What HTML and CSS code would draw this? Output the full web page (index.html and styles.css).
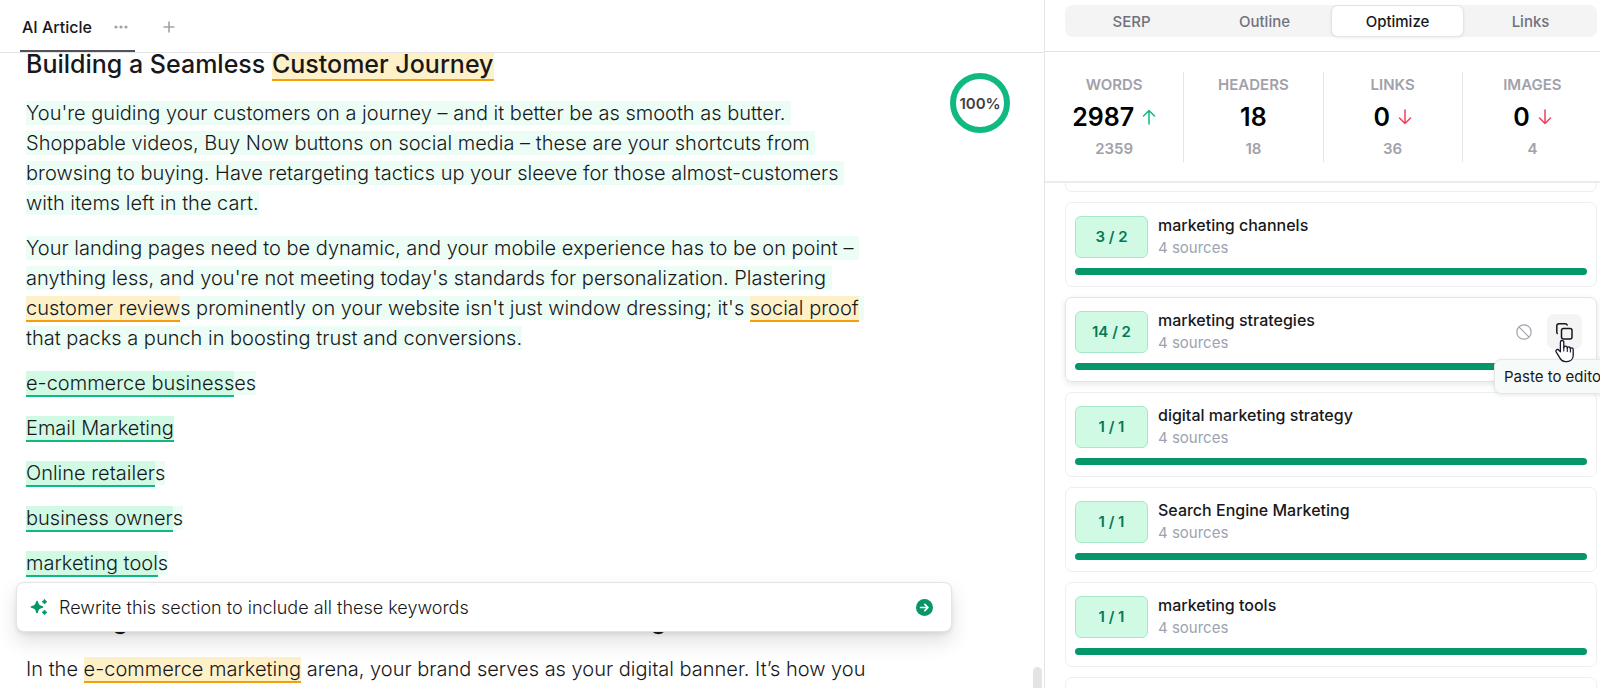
FILE: index.html
```html
<!DOCTYPE html>
<html lang="en">
<head>
<meta charset="utf-8">
<title>AI Article</title>
<link rel="stylesheet" href="styles.css">
</head>
<body>
<div class="app">
  <main class="editor">
    <header class="doc-tabs">
      <div class="doc-tab">
        <button class="doc-name" type="button">AI Article</button>
        <button class="icon-button" type="button" aria-label="Tab options"><svg width="14" height="4" viewBox="0 0 14 4" fill="currentColor"><circle cx="2" cy="2" r="1.6"/><circle cx="7" cy="2" r="1.6"/><circle cx="12" cy="2" r="1.6"/></svg></button>
      </div>
      <button class="icon-button" type="button" aria-label="Add tab"><svg width="12" height="12" viewBox="0 0 12 12" fill="none" stroke="currentColor" stroke-width="1.6"><path d="M6 .5v11M.5 6h11"/></svg></button>
    </header>
    <div class="scroll-area">
      <article class="article">
        <h2>Building a Seamless <mark class="warn">Customer Journey</mark></h2>
        <p><span class="fresh">You're guiding your customers on a journey – and it better be as smooth as butter. Shoppable videos, Buy Now buttons on social media – these are your shortcuts from browsing to buying. Have retargeting tactics up your sleeve for those almost-customers with items left in the cart.</span></p>
        <p><span class="fresh">Your landing pages need to be dynamic, and your mobile experience has to be on point – anything less, and you're not meeting today's standards for personalization. Plastering <mark class="warn">customer review</mark>s prominently on your website isn't just window dressing; it's <mark class="warn">social proof</mark> that packs a punch in boosting trust and conversions.</span></p>
        <p><span class="fresh"><mark class="good">e-commerce business</mark>es</span></p>
        <p><span class="fresh"><mark class="good">Email Marketing</mark></span></p>
        <p><span class="fresh"><mark class="good">Online retailer</mark>s</span></p>
        <p><span class="fresh"><mark class="good">business owner</mark>s</span></p>
        <p><span class="fresh"><mark class="good">marketing tool</mark>s</span></p>
        <h2 class="next">Creating an Effective E-commerce Website Marketing</h2>
        <p>In the <mark class="warn">e-commerce marketing</mark> arena, your brand serves as your digital banner. It’s how you</p>
      </article>
      <div class="score"><svg width="60" height="60" viewBox="0 0 60 60" fill="none"><circle cx="30" cy="30" r="27" stroke="#10b981" stroke-width="6"/></svg><span class="score-value">100%</span></div>
      <div class="scroll-thumb"></div>
      <form class="prompt">
        <svg width="18" height="18" viewBox="0 0 18 18" fill="#059669"><path d="M7 3.500c.9 3.600 1.900 4.600 5.500 5.500-3.600.9-4.600 1.900-5.500 5.500-.9-3.600-1.900-4.600-5.500-5.500 3.600-.9 4.600-1.900 5.500-5.500z" stroke="#059669" stroke-width="1.600" stroke-linejoin="round"/><path d="M14.500 1.300l1 1.400 1.400 1-1.400 1-1 1.400-1-1.400-1.400-1 1.400-1zM14.500 12l1 1.400 1.400 1-1.400 1-1 1.400-1-1.400-1.400-1 1.400-1z" stroke="#059669" stroke-width=".8" stroke-linejoin="round"/></svg>
        <input class="prompt-input" type="text" aria-label="Instruction" value="Rewrite this section to include all these keywords">
        <button class="send" type="button" aria-label="Run"><svg width="17" height="17" viewBox="0 0 17 17"><circle cx="8.500" cy="8.500" r="8.500" fill="#059669"/><path d="M4.600 8.500h7M8.800 5.300l3.200 3.200-3.200 3.200" fill="none" stroke="#fff" stroke-width="1.700" stroke-linecap="round" stroke-linejoin="round"/></svg></button>
      </form>
    </div>
  </main>
  <aside class="panel">
    <nav class="panel-tabs">
      <button class="seg" type="button">SERP</button>
      <button class="seg" type="button">Outline</button>
      <button class="seg active" type="button">Optimize</button>
      <button class="seg" type="button">Links</button>
    </nav>
    <section class="stats">
      <div class="stat"><span class="label">WORDS</span><span class="value">2987 <svg class="up" width="14" height="16" viewBox="0 0 14 16"><path d="M7 15V1.500M1.500 7L7 1.500 12.500 7"/></svg></span><span class="goal">2359</span></div>
      <div class="stat"><span class="label">HEADERS</span><span class="value">18</span><span class="goal">18</span></div>
      <div class="stat"><span class="label">LINKS</span><span class="value">0 <svg class="down" width="14" height="16" viewBox="0 0 14 16"><path d="M7 1v13.500M1.500 9L7 14.500 12.500 9"/></svg></span><span class="goal">36</span></div>
      <div class="stat"><span class="label">IMAGES</span><span class="value">0 <svg class="down" width="14" height="16" viewBox="0 0 14 16"><path d="M7 1v13.500M1.500 9L7 14.500 12.500 9"/></svg></span><span class="goal">4</span></div>
    </section>
    <div class="keywords">
      <div class="card scrolled"></div>
      <div class="card"><div class="row"><span class="count">3 / 2</span><div class="info"><span class="term">marketing channels</span><span class="sources">4 sources</span></div></div><div class="bar"></div></div>
      <div class="card hovered"><div class="row"><span class="count">14 / 2</span><div class="info"><span class="term">marketing strategies</span><span class="sources">4 sources</span></div>
        <div class="actions">
          <button class="action" type="button" aria-label="Ignore keyword"><svg width="16" height="16" viewBox="0 0 16 16" fill="none" stroke="#a1a1aa" stroke-width="1.200"><circle cx="8" cy="8" r="7.200"/><path d="M2.900 2.900l10.200 10.200"/></svg></button>
          <button class="action current" type="button" aria-label="Paste to editor"><svg width="17" height="17" viewBox="0 0 17 17" fill="none" stroke="#18181b" stroke-width="1.500" stroke-linejoin="round" stroke-linecap="round"><rect x="5.500" y="5.500" width="10.500" height="10.500" rx="2"/><path d="M1.300 10.500c-.4-.3-.5-.7-.5-1.200V3c0-1.200 1-2.200 2.200-2.200h6.300c.9 0 1.600.4 1.900 1.200"/></svg></button>
          <span class="tooltip" role="tooltip">Paste to editor</span>
          <svg class="pointer" width="20" height="24" viewBox="0 0 20 24"><path d="M7 1.500c-1 0-1.600.7-1.600 1.700v9.600L4 11.300c-.8-.9-1.900-1.100-2.600-.4-.7.600-.6 1.500-.1 2.300l3.800 6.200c1.200 2 2.700 3.200 5.300 3.200h1.400c3.700 0 6.400-2.500 6.400-6.300V10.500c0-1-.6-1.700-1.400-1.700-.9 0-1.400.6-1.400 1.300 0-1.500-.6-2.300-1.500-2.300s-1.600.6-1.600 1.500c0-1.300-.6-2.100-1.600-2.100s-1.900.6-1.900 1.600V3.200c0-1-.7-1.700-1.800-1.700z" fill="#fff" stroke="#18182b" stroke-width="1.300" stroke-linejoin="round"/><path d="M8.800 8v4M12.300 9v3.500M15.400 10v3" stroke="#18182b" stroke-width="1.100" stroke-linecap="round"/></svg>
        </div></div><div class="bar"></div></div>
      <div class="card"><div class="row"><span class="count">1 / 1</span><div class="info"><span class="term">digital marketing strategy</span><span class="sources">4 sources</span></div></div><div class="bar"></div></div>
      <div class="card"><div class="row"><span class="count">1 / 1</span><div class="info"><span class="term">Search Engine Marketing</span><span class="sources">4 sources</span></div></div><div class="bar"></div></div>
      <div class="card"><div class="row"><span class="count">1 / 1</span><div class="info"><span class="term">marketing tools</span><span class="sources">4 sources</span></div></div><div class="bar"></div></div>
      <div class="card"></div>
    </div>
  </aside>
</div>
</body>
</html>
```
FILE: styles.css
```css
* { box-sizing: border-box; }
body { margin: 0; font-family: Inter, "Liberation Sans", sans-serif; color: #18181b; background: #fff; }
button { font: inherit; color: inherit; background: none; border: 0; padding: 0; display: flex; align-items: center; justify-content: center; cursor: pointer; }
svg { display: block; flex: none; }

.app { display: flex; height: 100vh; overflow: hidden; }
.editor { flex: 1; min-width: 0; display: flex; flex-direction: column; }

.doc-tabs { display: flex; gap: 28px; height: 53px; padding-left: 20px; border-bottom: 1px solid #e4e4e7; flex: none; }
.doc-tab { display: flex; align-items: center; gap: 22px; padding: 4px 7px 0 2px; border-bottom: 2px solid #52525b; }
.doc-name { font-size: 16px; font-weight: 450; }
.icon-button { color: #a1a1aa; }
.doc-tabs > .icon-button { padding-top: 2px; }

.scroll-area { flex: 1; min-height: 0; position: relative; overflow: hidden; }
.article { max-width: 876px; padding-left: 26px; margin-top: -6px; display: flex; flex-direction: column; gap: 15px; white-space: pre-wrap; }
.article h2 { margin: 0 0 2px; font-size: 25px; line-height: 34px; font-weight: 500; }
.article .next { margin-top: 10px; }
.article p { margin: 0; font-size: 20px; line-height: 30px; font-weight: 330; }
.fresh { background: #ecfdf5; }
mark { color: inherit; }
.warn { background: #fef0c7; border-bottom: 2px solid #f59e0b; }
.good { background: #d1fae5; border-bottom: 2px solid #10b981; }

.score { position: absolute; top: 20px; right: 34px; width: 60px; height: 60px; }
.score-value { position: absolute; inset: 0; display: grid; place-items: center; font-size: 15px; font-weight: 600; color: #3f3f46; }
.scroll-thumb { position: absolute; right: 2px; bottom: 0; width: 9px; height: 21px; border-radius: 5px 5px 0 0; background: #e4e4e7; }

.prompt { position: absolute; left: 16px; right: 92px; bottom: 56px; height: 50px; display: flex; align-items: center; gap: 11px; padding: 0 18px 0 13px; background: #fff; border: 1px solid #e4e4e7; border-radius: 8px; box-shadow: 0 10px 20px rgba(0, 0, 0, .12), 0 2px 4px rgba(0, 0, 0, .08); }
.prompt-input { flex: 1; min-width: 0; border: 0; padding: 0; outline: 0; font: inherit; font-size: 18px; font-weight: 300; color: #18181b; background: none; }

.panel { flex: 0 0 556px; min-width: 0; display: flex; flex-direction: column; border-left: 1px solid #e4e4e7; }
.panel-tabs { display: grid; grid-template-columns: repeat(4, 1fr); margin: 5px 3px 14px 20px; background: #f4f4f5; border-radius: 8px; flex: none; }
.seg { height: 32px; font-size: 15px; font-weight: 450; color: #71717a; border-radius: 7px; }
.seg.active { background: #fff; color: #18181b; border: 1px solid #e4e4e7; box-shadow: 0 1px 3px rgba(0, 0, 0, .08); }

.stats { display: grid; grid-template-columns: repeat(4, 1fr); margin-right: -2px; padding: 20px 0 19px; border-top: 1px solid #e4e4e7; border-bottom: 2px solid #ececee; flex: none; }
.stat { display: flex; flex-direction: column; align-items: center; justify-content: space-between; height: 90px; padding: 3px 0; border-right: 1px solid #e4e4e7; }
.stat:last-child { border-right: 0; }
.label { font-size: 15px; line-height: 20px; font-weight: 600; color: #a1a1aa; }
.goal { font-size: 15px; line-height: 20px; font-weight: 600; color: #a1a1aa; }
.value { display: flex; align-items: center; gap: 8px; font-size: 25px; line-height: 30px; font-weight: 600; color: #000; }
.value svg { fill: none; stroke-width: 1.5; stroke-linecap: round; stroke-linejoin: round; }
.up { stroke: #10b981; }
.down { stroke: #f43f5e; }

.keywords { flex: 1; min-height: 0; overflow: hidden; display: flex; flex-direction: column; gap: 10px; padding: 0 3px 0 20px; }
.card { flex: none; height: 85px; padding: 11px 9px; display: flex; flex-direction: column; justify-content: space-between; border: 1px solid #efeff1; border-radius: 7px; }
.scrolled { margin-top: -76px; }
.hovered { border-color: #e4e4e7; box-shadow: 0 2px 6px rgba(0, 0, 0, .1); position: relative; z-index: 1; }
.row { display: flex; align-items: center; gap: 10px; }
.count { width: 73px; height: 42px; display: grid; place-items: center; border: 1px solid #a7e8cb; border-radius: 6px; background: #d1fae5; color: #047857; font-size: 15px; font-weight: 600; }
.info { flex: 1; display: flex; flex-direction: column; gap: 1px; }
.term { font-size: 16px; line-height: 22px; font-weight: 450; }
.sources { font-size: 15px; line-height: 22px; color: #9ca3af; }
.bar { height: 7px; border-radius: 4px; background: #059669; }
.actions { position: relative; display: flex; align-items: center; gap: 6px; padding-right: 5px; }
.action { width: 35px; height: 35px; border-radius: 7px; }
.current { background: #f4f4f5; }
.tooltip { position: absolute; top: 45px; left: -12px; padding: 0 9px; line-height: 33px; font-size: 15px; white-space: nowrap; background: #f6fbfa; border: 1px solid #e4e9e8; border-radius: 7px; box-shadow: 0 1px 4px rgba(0, 0, 0, .1); }
.pointer { position: absolute; top: 25px; left: 49px; }
```
